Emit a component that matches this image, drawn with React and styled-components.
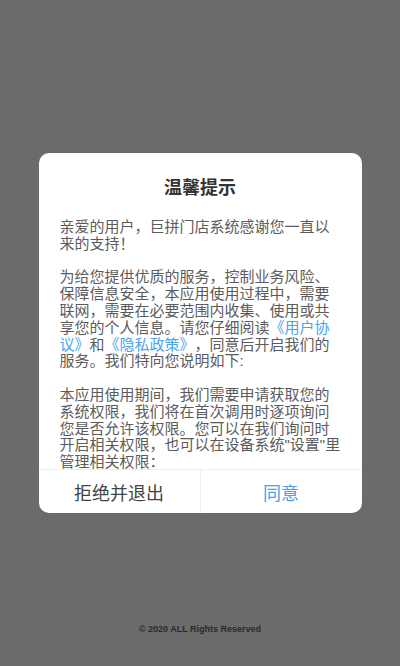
import React from 'react';
import styled, { createGlobalStyle } from 'styled-components';

const GlobalStyle = createGlobalStyle`
    html, body {
        margin: 0;
        padding: 0;
        background-color: #6b6b6b;
    }
    * {
        box-sizing: border-box;
    }
`;

const Page = styled.div`
    height: 666px;
    display: flex;
    flex-direction: column;
    align-items: center;
    padding-top: 153px;
    background-color: #6b6b6b;
    font-family: "Noto Sans CJK SC", "Noto Sans", sans-serif;
`;

const Dialog = styled.div`
    width: 323px;
    height: 360px;
    background-color: #fff;
    border-radius: 10px;
    display: flex;
    flex-direction: column;
    overflow: hidden;
`;

const Title = styled.h2`
    margin: 0;
    padding-top: 22px;
    height: 44px;
    line-height: 22px;
    font-size: 18px;
    font-weight: bold;
    color: #333;
    text-align: center;
`;

const Body = styled.div`
    flex: 1;
    overflow: hidden;
    padding: 22px 20px 0 21px;
    font-family: "Liberation Sans", "Noto Sans CJK SC", sans-serif;
    font-size: 15px;
    line-height: 16.8px;
    color: #5c5c5c;
    text-spacing-trim: space-all;
`;

const Paragraph = styled.p`
    margin: 0 0 16.8px;
`;

const Link = styled.span`
    color: #4aa3f2;
`;

const Actions = styled.div`
    display: flex;
    height: 44px;
    border-top: 1px solid #eeeeee;
`;

const ActionButton = styled.button`
    flex: 1;
    border: none;
    background: none;
    padding: 0;
    font-family: inherit;
    font-size: 18px;
    color: ${props => (props.$primary ? '#47a1f0' : '#444')};
    border-left: ${props => (props.$primary ? '1px solid #eeeeee' : 'none')};
    cursor: pointer;
`;

const Footer = styled.div`
    margin-top: auto;
    padding-bottom: 29px;
    line-height: 16px;
    font-family: "Liberation Sans", Arial, sans-serif;
    font-size: 9px;
    font-weight: bold;
    color: #2a2a2a;
`;

const App = () => {
    return (
        <>
            <GlobalStyle />
            <Page>
                <Dialog>
                    <Title>温馨提示</Title>
                    <Body>
                        <Paragraph>亲爱的用户，巨拼门店系统感谢您一直以来的支持！</Paragraph>
                        <Paragraph>
                            为给您提供优质的服务，控制业务风险、保障信息安全，本应用使用过程中，需要联网，需要在必要范围内收集、使用或共享您的个人信息。请您仔细阅读
                            <Link>《用户协议》</Link>和<Link>《隐私政策》</Link>
                            ，同意后开启我们的服务。我们特向您说明如下:
                        </Paragraph>
                        <Paragraph>
                            本应用使用期间，我们需要申请获取您的系统权限，我们将在首次调用时逐项询问您是否允许该权限。您可以在我们询问时开启相关权限，也可以在设备系统"设置"里管理相关权限：
                        </Paragraph>
                        <Paragraph>
                            1. 设备信息：用于识别设备，保障账号与交易安全。
                        </Paragraph>
                    </Body>
                    <Actions>
                        <ActionButton>拒绝并退出</ActionButton>
                        <ActionButton $primary>同意</ActionButton>
                    </Actions>
                </Dialog>
                <Footer>© 2020 ALL Rights Reserved</Footer>
            </Page>
        </>
    );
};

export default App;
